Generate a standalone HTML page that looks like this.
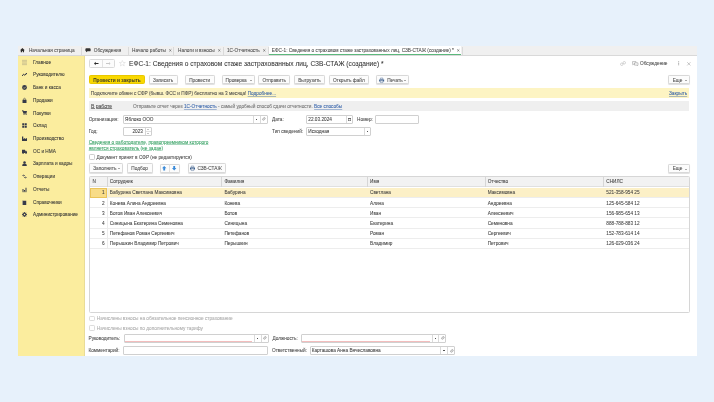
<!DOCTYPE html>
<html><head><meta charset="utf-8">
<style>
*{box-sizing:border-box;margin:0;padding:0}
html,body{width:714px;height:402px;overflow:hidden;background:#e7f1fb;font-family:"Liberation Sans",sans-serif;color:#484848}
#root *{-webkit-text-stroke:0.06px currentColor}
.a{position:absolute}
svg.a{overflow:visible}
.t{position:absolute;white-space:nowrap;font-size:4.73px;line-height:6px}
#win{position:absolute;left:18px;top:46px;width:679px;height:309.5px;background:#fff}
#tabs{position:absolute;left:18px;top:46px;width:679px;height:9.5px;background:#f0f0f0;border-bottom:1px solid #d9d9d9}
#side{position:absolute;left:18px;top:55.5px;width:67px;height:300px;background:#fbed9e;border-right:1px solid #e9dc98}
.sep{position:absolute;top:46.5px;width:1px;height:8.5px;background:#dadada}
.btn{position:absolute;height:9.4px;border:1px solid #d8d8d8;border-radius:1.5px;background:#fcfcfc;box-shadow:0 0.7px 0.7px rgba(0,0,0,.12);font-size:4.73px;line-height:7.3px;padding-top:0.8px;text-align:center;white-space:nowrap;color:#4a4a4a}
.inp{position:absolute;height:8.8px;border:1px solid #d0d0d0;border-radius:1px;background:#fff;font-size:4.73px;line-height:6.6px;padding-top:1px;white-space:nowrap;padding-left:0.9px;color:#3a3a3a}
.lnk{color:#2f5ea8;text-decoration:underline;text-decoration-thickness:0.5px;text-underline-offset:0.5px;text-decoration-color:rgba(47,94,168,.4)}
.cb{position:absolute;width:5.8px;height:5.6px;border:1px solid #cdcdcd;border-radius:1.2px;background:#fff}
.si{position:absolute;left:33px;font-size:4.73px;line-height:6px;padding-top:0.7px;white-space:nowrap;color:#333}
.vl{position:absolute;width:1px;background:#d6d6d6}
.row{position:absolute;left:89.6px;width:599px;border-bottom:1px solid #ededed}
.c{position:absolute;font-size:4.73px;line-height:10.25px;padding-top:0.7px;white-space:nowrap;color:#3e3e3e}
.dd{position:absolute;width:0;height:0;border-left:0.9px solid transparent;border-right:0.9px solid transparent;border-top:1px solid #555}
</style></head><body><div id="root" style="position:absolute;left:0;top:0;width:714px;height:402px;filter:blur(0.2px)">
<div id="win"></div><div id="tabs"></div><div id="side"></div>
<svg class="a" style="left:19.7px;top:47.8px" width="4.8" height="4.4" viewBox="0 0 10 9"><path d="M5 0L0 4.6h1.6V9h2.6V6.4h1.6V9h2.6V4.6H10z" fill="#2e2e2e"/></svg>
<div class="t" style="left:28.9px;top:47.9px">Начальная страница</div>
<div class="sep" style="left:80.5px"></div>
<svg class="a" style="left:84.8px;top:47.6px" width="6" height="4.3" viewBox="0 0 12 9"><path d="M2.5 0.5h7a2 2 0 0 1 2 2v2.5a2 2 0 0 1-2 2H5L2 8.8V7a2 2 0 0 1-1.5-2V2.5a2 2 0 0 1 2-2z" fill="#333"/></svg>
<div class="t" style="left:93.8px;top:47.9px">Обсуждения</div>
<div class="sep" style="left:128px"></div>
<div class="t" style="left:132px;top:47.9px">Начало работы</div>
<svg class="a" style="left:168.6px;top:48.9px" width="2.6" height="2.8" viewBox="0 0 6 6"><path d="M0.5 0.5l5 5M5.5 0.5l-5 5" stroke="#555" stroke-width="1.4"/></svg>
<div class="sep" style="left:173.3px"></div>
<div class="t" style="left:178px;top:47.9px">Налоги и взносы</div>
<svg class="a" style="left:217.5px;top:48.9px" width="2.6" height="2.8" viewBox="0 0 6 6"><path d="M0.5 0.5l5 5M5.5 0.5l-5 5" stroke="#555" stroke-width="1.4"/></svg>
<div class="sep" style="left:222.7px"></div>
<div class="t" style="left:227px;top:47.9px">1С-Отчетность</div>
<svg class="a" style="left:262.5px;top:48.9px" width="2.6" height="2.8" viewBox="0 0 6 6"><path d="M0.5 0.5l5 5M5.5 0.5l-5 5" stroke="#555" stroke-width="1.4"/></svg>
<div class="sep" style="left:267.6px"></div>
<div class="a" style="left:268.6px;top:46px;width:192.6px;height:9.1px;background:#fff;border-bottom:1.3px solid #5cb87c"></div>
<div class="t" style="left:271.8px;top:47.9px">ЕФС-1: Сведения о страховом стаже застрахованных лиц, СЗВ-СТАЖ (создание) *</div>
<svg class="a" style="left:457.3px;top:48.9px" width="2.6" height="2.8" viewBox="0 0 6 6"><path d="M0.5 0.5l5 5M5.5 0.5l-5 5" stroke="#555" stroke-width="1.4"/></svg>
<div class="sep" style="left:462.3px"></div>
<svg class="a" style="left:22.2px;top:59.60px" width="5" height="5" viewBox="0 0 10 10"><path d="M0 0.7h10M0 3.6h10M0 6.4h10M0 9.3h10" stroke="#bdb38a" stroke-width="1.4"/></svg>
<div class="si" style="top:59.00px">Главное</div>
<svg class="a" style="left:22.2px;top:72.32px" width="5" height="5" viewBox="0 0 10 10"><path d="M0.3 8L3.2 4.3L5.8 6.6L8.6 3.2" stroke="#2e3140" stroke-width="1.9" fill="none"/><path d="M6.6 1.8h3.4v3.4z" fill="#2e3140"/></svg>
<div class="si" style="top:71.72px">Руководителю</div>
<svg class="a" style="left:22.2px;top:85.04px" width="5" height="5" viewBox="0 0 10 10"><circle cx="5" cy="5" r="4.8" fill="#363a48"/><path d="M2.8 5.2L4.4 6.8L7.4 3.6" stroke="#fbed9e" stroke-width="1.3" fill="none"/></svg>
<div class="si" style="top:84.44px">Банк и касса</div>
<svg class="a" style="left:22.2px;top:97.76px" width="5" height="5" viewBox="0 0 10 10"><path d="M1 3.5h8v6.5H1z" fill="#363a48"/><path d="M3.2 4V2.2a1.8 1.8 0 0 1 3.6 0V4" stroke="#363a48" stroke-width="1" fill="none"/></svg>
<div class="si" style="top:97.16px">Продажи</div>
<svg class="a" style="left:22.2px;top:110.48px" width="5" height="5" viewBox="0 0 10 10"><path d="M0 0.5h2.2l0.6 1.5H10L8.8 6.8H3.3z" fill="#363a48"/><path d="M2 0.5L3.5 7.5h6" stroke="#363a48" stroke-width="1" fill="none"/><circle cx="4" cy="9" r="1" fill="#363a48"/><circle cx="8.3" cy="9" r="1" fill="#363a48"/></svg>
<div class="si" style="top:109.88px">Покупки</div>
<svg class="a" style="left:22.2px;top:123.20px" width="5" height="5" viewBox="0 0 10 10"><rect x="0.5" y="0.5" width="4" height="4" fill="#363a48"/><rect x="5.5" y="0.5" width="4" height="4" fill="#363a48"/><rect x="0.5" y="5.5" width="4" height="4" fill="#363a48"/><rect x="5.5" y="5.5" width="4" height="4" fill="#363a48"/></svg>
<div class="si" style="top:122.60px">Склад</div>
<svg class="a" style="left:22.2px;top:135.92px" width="5" height="5" viewBox="0 0 10 10"><path d="M0 10V1h2.5v5l3.5-2v2l4-2v6z" fill="#363a48"/></svg>
<div class="si" style="top:135.32px">Производство</div>
<svg class="a" style="left:22.2px;top:148.64px" width="5" height="5" viewBox="0 0 10 10"><path d="M0 1.5h6.2v6.5H0z" fill="#363a48"/><path d="M6.2 3.5h2.3L10 5.5v2.5H6.2z" fill="#363a48"/><circle cx="2.2" cy="8.6" r="1.4" fill="#363a48"/><circle cx="8" cy="8.6" r="1.4" fill="#363a48"/></svg>
<div class="si" style="top:148.04px">ОС и НМА</div>
<svg class="a" style="left:22.2px;top:161.36px" width="5" height="5" viewBox="0 0 10 10"><circle cx="5" cy="2.8" r="2.5" fill="#363a48"/><path d="M0.5 10V8a4.5 3 0 0 1 9 0v2z" fill="#363a48"/></svg>
<div class="si" style="top:160.76px">Зарплата и кадры</div>
<svg class="a" style="left:22.2px;top:174.08px" width="5" height="5" viewBox="0 0 10 10"><path d="M0.5 3h4.5M3.2 1.2L5 3L3.2 4.8M9.5 7h-4.5M6.8 5.2L5 7L6.8 8.8" stroke="#3a3e50" stroke-width="1.3" fill="none"/></svg>
<div class="si" style="top:173.48px">Операции</div>
<svg class="a" style="left:22.2px;top:186.80px" width="5" height="5" viewBox="0 0 10 10"><path d="M0.5 9.5h9" stroke="#363a48" stroke-width="1"/><rect x="1" y="4" width="2" height="5" fill="#363a48"/><rect x="4" y="6" width="2" height="3" fill="#363a48"/><rect x="7" y="1.5" width="2" height="7.5" fill="#363a48"/></svg>
<div class="si" style="top:186.20px">Отчеты</div>
<svg class="a" style="left:22.2px;top:199.52px" width="5" height="5" viewBox="0 0 10 10"><path d="M2 1.5h6.5v8.5H2z" fill="#363a48"/><path d="M1 1h1.2v9H1z" fill="#5d6070"/></svg>
<div class="si" style="top:198.92px">Справочники</div>
<svg class="a" style="left:22.2px;top:212.24px" width="5" height="5" viewBox="0 0 10 10"><circle cx="5" cy="5" r="3.6" fill="#363a48"/><circle cx="9.00" cy="5.00" r="1.1" fill="#363a48"/><circle cx="7.83" cy="7.83" r="1.1" fill="#363a48"/><circle cx="5.00" cy="9.00" r="1.1" fill="#363a48"/><circle cx="2.17" cy="7.83" r="1.1" fill="#363a48"/><circle cx="1.00" cy="5.00" r="1.1" fill="#363a48"/><circle cx="2.17" cy="2.17" r="1.1" fill="#363a48"/><circle cx="5.00" cy="1.00" r="1.1" fill="#363a48"/><circle cx="7.83" cy="2.17" r="1.1" fill="#363a48"/><circle cx="5" cy="5" r="1.5" fill="#fbed9e"/></svg>
<div class="si" style="top:211.64px">Администрирование</div>
<div class="btn" style="left:88.8px;top:59px;width:26px;height:8.7px;border-color:#dadada;box-shadow:none"></div><div class="a" style="left:101.6px;top:59.5px;width:1px;height:7.7px;background:#e2e2e2"></div>
<svg class="a" style="left:93.5px;top:61.8px" width="4.5" height="3" viewBox="0 0 9 6"><path d="M0 3L3.4 -0.4v2.3h5.6v2.2H3.4v2.3z" fill="#2a2a2a"/></svg>
<svg class="a" style="left:106.3px;top:61.8px" width="4.5" height="3" viewBox="0 0 9 6"><path d="M9 3L6 0v2H0v2h6v2z" fill="#c8c8c8"/></svg>
<svg class="a" style="left:118.9px;top:59.9px" width="6.7" height="6.6" viewBox="0 0 20 19"><path d="M10 1l2.6 6h6.4l-5.1 4 1.9 6.5L10 13.8 4.2 17.5 6.1 11 1 7h6.4z" fill="none" stroke="#cfcfcf" stroke-width="1.3"/></svg>
<div class="a" style="left:129px;top:58.9px;font-size:6.6px;line-height:9px;white-space:nowrap;color:#333">ЕФС-1: Сведения о страховом стаже застрахованных лиц, СЗВ-СТАЖ (создание) *</div>
<svg class="a" style="left:619.8px;top:60.9px" width="6" height="5" viewBox="0 0 12 10"><circle cx="3.5" cy="6.5" r="2.5" fill="none" stroke="#aaa" stroke-width="1"/><circle cx="8.5" cy="3.5" r="2.5" fill="none" stroke="#aaa" stroke-width="1"/></svg>
<svg class="a" style="left:631.7px;top:60.8px" width="6.5" height="5.2" viewBox="0 0 13 10"><path d="M1 1h7v4.5H4L1.5 7.5z" fill="none" stroke="#888" stroke-width="1"/><path d="M5 3.5h7v4.5L10.5 9.5V8H5z" fill="#fff" stroke="#888" stroke-width="1"/></svg>
<div class="t" style="left:640px;top:61.1px">Обсуждение</div>
<svg class="a" style="left:677.8px;top:61.2px" width="1.4" height="4.4" viewBox="0 0 2 6"><circle cx="1" cy="0.8" r="0.75" fill="#888"/><circle cx="1" cy="3" r="0.75" fill="#888"/><circle cx="1" cy="5.2" r="0.75" fill="#888"/></svg>
<svg class="a" style="left:687.4px;top:61.5px" width="3.7" height="3.7" viewBox="0 0 8 8"><path d="M0.5 0.5l7 7M7.5 0.5l-7 7" stroke="#888" stroke-width="1"/></svg>
<div class="btn" style="left:88.7px;top:75px;width:56.5px;height:9.4px;background:#f9d800;border-color:#e9c800;color:#3a3a2a;box-shadow:none;font-weight:bold;font-size:4.75px;-webkit-text-stroke:0">Провести и закрыть</div>
<div class="btn" style="left:148.5px;top:75px;width:29.3px;height:9.4px;">Записать</div>
<div class="btn" style="left:184.5px;top:75px;width:30.3px;height:9.4px;">Провести</div>
<div class="btn" style="left:222.4px;top:75px;width:32.4px;height:9.4px;">Проверка <span style="display:inline-block;vertical-align:middle;margin-left:1.5px;width:0;height:0;border-left:1.1px solid transparent;border-right:1.1px solid transparent;border-top:1.3px solid #555"></span></div>
<div class="btn" style="left:258.3px;top:75px;width:31.7px;height:9.4px;">Отправить</div>
<div class="btn" style="left:294px;top:75px;width:31px;height:9.4px;">Выгрузить</div>
<div class="btn" style="left:328.6px;top:75px;width:40.4px;height:9.4px;">Открыть файл</div>
<div class="btn" style="left:376.2px;top:75px;width:32.5px;height:9.4px;"><span style="padding-left:8.5px">Печать</span><span style="display:inline-block;vertical-align:middle;margin-left:1.5px;width:0;height:0;border-left:1.1px solid transparent;border-right:1.1px solid transparent;border-top:1.3px solid #555"></span></div>
<svg class="a" style="left:378.9px;top:77.6px" width="5.3" height="4.6" viewBox="0 0 12 11"><path d="M3 0h6v3H3z" fill="none" stroke="#3c5f8c" stroke-width="1"/><path d="M0 3.5h12v5H9.5V6h-7v2.5H0z" fill="#3c5f8c"/><path d="M3 7h6v4H3z" fill="none" stroke="#3c5f8c" stroke-width="1"/></svg>
<div class="btn" style="left:668.4px;top:75.2px;width:21.2px;height:9.2px;"><span style="padding-left:1.6px">Еще</span><span style="display:inline-block;vertical-align:middle;margin-left:2.5px;width:0;height:0;border-left:1.1px solid transparent;border-right:1.1px solid transparent;border-top:1.3px solid #555"></span></div>
<div class="a" style="left:88.7px;top:88.3px;width:600.7px;height:9.5px;background:#fdf4c3"></div>
<div class="t" style="left:90.8px;top:91.3px">Подключите обмен с СФР (бывш. ФСС и ПФР) бесплатно на 3 месяца! <span class="lnk">Подробнее...</span></div>
<div class="t lnk" style="left:669px;top:91.3px">Закрыть</div>
<div class="a" style="left:88.7px;top:101.1px;width:600.7px;height:10.3px;background:#efefef"></div>
<div class="a" style="left:90.9px;top:103.2px;font-size:5.1px;line-height:6px;white-space:nowrap;color:#444;text-decoration:underline;text-decoration-thickness:0.5px;text-underline-offset:0.5px;text-underline-offset:0px;text-decoration-color:rgba(60,60,60,.6)">В работе</div>
<div class="t" style="left:132.9px;top:104.1px;color:#707070">Отправьте отчет через <span class="lnk">1С-Отчетность</span> - самый удобный способ сдачи отчетности. <span class="lnk">Все способы</span></div>
<div class="t" style="left:88.7px;top:117.3px">Организация:</div>
<div class="inp" style="left:123.2px;top:114.9px;width:144.8px">Яблоко ООО</div>
<div class="a" style="left:253.2px;top:115.9px;width:1px;height:6.800000000000001px;background:#dadada"></div><div class="a" style="left:256.2px;top:118.60000000000001px;width:1.3px;height:1.3px;background:#555"></div>
<div class="a" style="left:260.2px;top:115.9px;width:1px;height:6.800000000000001px;background:#dadada"></div><svg class="a" style="left:262.4px;top:117.30000000000001px" width="3.8" height="3.8" viewBox="0 0 8 8"><ellipse cx="4" cy="4" rx="3.3" ry="2" transform="rotate(-45 4 4)" fill="none" stroke="#909090" stroke-width="1.4"/><path d="M2.8 5.2L5.2 2.8" stroke="#909090" stroke-width="1"/></svg>
<div class="t" style="left:272px;top:117.3px">Дата:</div>
<div class="inp" style="left:306.4px;top:114.9px;width:46.6px">22.03.2024</div>
<div class="a" style="left:345.6px;top:115.9px;width:1px;height:6.8px;background:#dadada"></div>
<svg class="a" style="left:348px;top:117.7px" width="3" height="3" viewBox="0 0 6 6"><rect x="0.5" y="0.5" width="5" height="5" fill="none" stroke="#555" stroke-width="1"/><rect x="0.5" y="0.5" width="5" height="1.6" fill="#555"/></svg>
<div class="t" style="left:357.1px;top:117.3px">Номер:</div>
<div class="inp" style="left:375.4px;top:114.9px;width:43.6px"></div>
<div class="t" style="left:88.7px;top:129.4px">Год:</div>
<div class="inp" style="left:123.2px;top:127.2px;width:28.5px;text-align:right;padding-right:7.8px">2023</div>
<div class="a" style="left:144.5px;top:128.2px;width:1px;height:6.6px;background:#d6d6d6"></div>
<div class="a" style="left:145.5px;top:131.3px;width:5.4px;height:0.6px;background:#e0e0e0"></div>
<div class="a" style="left:147.3px;top:129.3px;width:0;height:0;border-left:0.8px solid transparent;border-right:0.8px solid transparent;border-bottom:0.9px solid #888"></div>
<div class="a" style="left:147.3px;top:133px;width:0;height:0;border-left:0.8px solid transparent;border-right:0.8px solid transparent;border-top:0.9px solid #888"></div>
<div class="t" style="left:272px;top:129.4px">Тип сведений:</div>
<div class="inp" style="left:306.4px;top:127.2px;width:64.5px">Исходная</div>
<div class="a" style="left:363.6px;top:128.2px;width:1px;height:6.800000000000001px;background:#dadada"></div><div class="a" style="left:366.6px;top:130.9px;width:1.3px;height:1.3px;background:#555"></div>
<div class="t" style="left:88.7px;top:140px;color:#2f9e5e;line-height:5.9px"><span style="text-decoration:underline;text-decoration-thickness:0.5px;text-underline-offset:0px;text-decoration-color:rgba(47,158,94,.4)">Сведения о работодателе, правопреемником которого</span><br><span style="text-decoration:underline;text-decoration-thickness:0.5px;text-underline-offset:0px;text-decoration-color:rgba(47,158,94,.4)">является страхователь (не задан)</span></div>
<div class="cb" style="left:88.9px;top:154.2px"></div>
<div class="t" style="left:96.4px;top:155.4px">Документ принят в СФР (не редактируется)</div>
<div class="btn" style="left:88.8px;top:163.4px;width:34px;height:9.3px;"><span style="padding-left:1.5px">Заполнить</span><span style="display:inline-block;vertical-align:middle;margin-left:1.5px;width:0;height:0;border-left:1.1px solid transparent;border-right:1.1px solid transparent;border-top:1.3px solid #555"></span></div>
<div class="btn" style="left:126.6px;top:163.4px;width:26px;height:9.3px;">Подбор</div>
<div class="btn" style="left:159.5px;top:163.5px;width:20.2px;height:9.2px;"></div>
<div class="a" style="left:169.3px;top:164.3px;width:1px;height:7.6px;background:#e0e0e0"></div>
<svg class="a" style="left:161.9px;top:165.8px" width="4.4" height="4.4" viewBox="0 0 8 8"><path d="M4 0L8 4.2H5.7V8H2.3V4.2H0z" fill="#3a8ad8"/></svg>
<svg class="a" style="left:171.9px;top:165.8px" width="4.4" height="4.4" viewBox="0 0 8 8"><path d="M4 8L8 3.8H5.7V0H2.3V3.8H0z" fill="#3a8ad8"/></svg>
<div class="btn" style="left:187.5px;top:163.4px;width:38.7px;height:9.3px;"><span style="padding-left:5.5px">СЗВ-СТАЖ</span></div>
<svg class="a" style="left:189.9px;top:165.9px" width="5" height="4.6" viewBox="0 0 12 11"><path d="M3 0h6v3H3z" fill="none" stroke="#3c5f8c" stroke-width="1"/><path d="M0 3.5h12v5H9.5V6h-7v2.5H0z" fill="#3c5f8c"/><path d="M3 7h6v4H3z" fill="none" stroke="#3c5f8c" stroke-width="1"/></svg>
<div class="btn" style="left:668.4px;top:163.5px;width:21.2px;height:9.2px;"><span style="padding-left:1.6px">Еще</span><span style="display:inline-block;vertical-align:middle;margin-left:2.5px;width:0;height:0;border-left:1.1px solid transparent;border-right:1.1px solid transparent;border-top:1.3px solid #555"></span></div>
<div class="a" style="left:88.6px;top:175.8px;width:601px;height:136.8px;border:1px solid #d6d6d6;border-radius:1.5px"></div>
<div class="a" style="left:89.6px;top:176.8px;width:599px;height:10.4px;background:#f2f2f2;border-bottom:1px solid #e0e0e0"></div>
<div class="c" style="left:92.4px;top:176.8px;padding-top:0">N</div>
<div class="c" style="left:109.8px;top:176.8px;padding-top:0">Сотрудник</div>
<div class="c" style="left:224.4px;top:176.8px;padding-top:0">Фамилия</div>
<div class="c" style="left:370px;top:176.8px;padding-top:0">Имя</div>
<div class="c" style="left:487.7px;top:176.8px;padding-top:0">Отчество</div>
<div class="c" style="left:606.3px;top:176.8px;padding-top:0">СНИЛС</div>
<div class="vl" style="left:106.5px;top:176.8px;height:10.2px"></div>
<div class="vl" style="left:221px;top:176.8px;height:10.2px"></div>
<div class="vl" style="left:367.2px;top:176.8px;height:10.2px"></div>
<div class="vl" style="left:484.6px;top:176.8px;height:10.2px"></div>
<div class="vl" style="left:602.6px;top:176.8px;height:10.2px"></div>
<div class="row" style="top:187.60px;height:10.25px;background:#fcf0c7;"></div>
<div class="a" style="left:89.6px;top:187.60px;width:17px;height:10.25px;background:#f8dc88;border:1px solid #eac45a"></div>
<div class="c" style="left:89.6px;width:15px;text-align:right;top:187.60px">1</div>
<div class="vl" style="left:106.5px;top:187.60px;height:10.25px;background:#ececec"></div>
<div class="c" style="left:109.8px;top:187.60px">Бабурина Светлана Максимовна</div>
<div class="c" style="left:224.4px;top:187.60px">Бабурина</div>
<div class="c" style="left:370px;top:187.60px">Светлана</div>
<div class="c" style="left:487.7px;top:187.60px">Максимовна</div>
<div class="c" style="left:606.3px;top:187.60px">521-358-954 25</div>
<div class="row" style="top:197.82px;height:10.25px;"></div>
<div class="c" style="left:89.6px;width:15px;text-align:right;top:197.82px">2</div>
<div class="vl" style="left:106.5px;top:197.82px;height:10.25px;background:#ececec"></div>
<div class="c" style="left:109.8px;top:197.82px">Конева Алина Андреевна</div>
<div class="c" style="left:224.4px;top:197.82px">Конева</div>
<div class="c" style="left:370px;top:197.82px">Алина</div>
<div class="c" style="left:487.7px;top:197.82px">Андреевна</div>
<div class="c" style="left:606.3px;top:197.82px">125-645-584 12</div>
<div class="row" style="top:208.04px;height:10.25px;"></div>
<div class="c" style="left:89.6px;width:15px;text-align:right;top:208.04px">3</div>
<div class="vl" style="left:106.5px;top:208.04px;height:10.25px;background:#ececec"></div>
<div class="c" style="left:109.8px;top:208.04px">Ботов Иван Алексеевич</div>
<div class="c" style="left:224.4px;top:208.04px">Ботов</div>
<div class="c" style="left:370px;top:208.04px">Иван</div>
<div class="c" style="left:487.7px;top:208.04px">Алексеевич</div>
<div class="c" style="left:606.3px;top:208.04px">156-985-654 13</div>
<div class="row" style="top:218.26px;height:10.25px;"></div>
<div class="c" style="left:89.6px;width:15px;text-align:right;top:218.26px">4</div>
<div class="vl" style="left:106.5px;top:218.26px;height:10.25px;background:#ececec"></div>
<div class="c" style="left:109.8px;top:218.26px">Синицына Екатерина Семеновна</div>
<div class="c" style="left:224.4px;top:218.26px">Синицына</div>
<div class="c" style="left:370px;top:218.26px">Екатерина</div>
<div class="c" style="left:487.7px;top:218.26px">Семеновна</div>
<div class="c" style="left:606.3px;top:218.26px">888-788-883 12</div>
<div class="row" style="top:228.48px;height:10.25px;"></div>
<div class="c" style="left:89.6px;width:15px;text-align:right;top:228.48px">5</div>
<div class="vl" style="left:106.5px;top:228.48px;height:10.25px;background:#ececec"></div>
<div class="c" style="left:109.8px;top:228.48px">Петефанов Роман Сергеевич</div>
<div class="c" style="left:224.4px;top:228.48px">Петефанов</div>
<div class="c" style="left:370px;top:228.48px">Роман</div>
<div class="c" style="left:487.7px;top:228.48px">Сергеевич</div>
<div class="c" style="left:606.3px;top:228.48px">152-783-614 14</div>
<div class="row" style="top:238.70px;height:10.25px;"></div>
<div class="c" style="left:89.6px;width:15px;text-align:right;top:238.70px">6</div>
<div class="vl" style="left:106.5px;top:238.70px;height:10.25px;background:#ececec"></div>
<div class="c" style="left:109.8px;top:238.70px">Перышкин Владимир Петрович</div>
<div class="c" style="left:224.4px;top:238.70px">Перышкин</div>
<div class="c" style="left:370px;top:238.70px">Владимир</div>
<div class="c" style="left:487.7px;top:238.70px">Петрович</div>
<div class="c" style="left:606.3px;top:238.70px">126-029-036 24</div>
<div class="cb" style="left:89px;top:315.9px;border-color:#dcdcdc"></div>
<div class="t" style="left:96.8px;top:316.4px;color:#ababab">Начислены взносы на обязательное пенсионное страхование</div>
<div class="cb" style="left:89px;top:325.3px;border-color:#dcdcdc"></div>
<div class="t" style="left:96.8px;top:326.2px;color:#ababab">Начислены взносы по дополнительному тарифу</div>
<div class="t" style="left:88.5px;top:336.3px">Руководитель:</div>
<div class="inp" style="left:123.8px;top:334px;width:144.8px"></div>
<div class="a" style="left:124.8px;top:341.2px;width:127.4px;height:0.8px;background:#f3bdbd"></div>
<div class="a" style="left:253.8px;top:335px;width:1px;height:6.800000000000001px;background:#dadada"></div><div class="a" style="left:256.8px;top:337.7px;width:1.3px;height:1.3px;background:#555"></div>
<div class="a" style="left:261.1px;top:335px;width:1px;height:6.800000000000001px;background:#dadada"></div><svg class="a" style="left:263.3px;top:336.4px" width="3.8" height="3.8" viewBox="0 0 8 8"><ellipse cx="4" cy="4" rx="3.3" ry="2" transform="rotate(-45 4 4)" fill="none" stroke="#909090" stroke-width="1.4"/><path d="M2.8 5.2L5.2 2.8" stroke="#909090" stroke-width="1"/></svg>
<div class="t" style="left:272.5px;top:336.3px">Должность:</div>
<div class="inp" style="left:301.4px;top:334px;width:144.6px"></div>
<div class="a" style="left:302.4px;top:341.2px;width:127.6px;height:0.8px;background:#f3bdbd"></div>
<div class="a" style="left:431.5px;top:335px;width:1px;height:6.800000000000001px;background:#dadada"></div><div class="a" style="left:434.5px;top:337.7px;width:1.3px;height:1.3px;background:#555"></div>
<div class="a" style="left:438.3px;top:335px;width:1px;height:6.800000000000001px;background:#dadada"></div><svg class="a" style="left:440.5px;top:336.4px" width="3.8" height="3.8" viewBox="0 0 8 8"><ellipse cx="4" cy="4" rx="3.3" ry="2" transform="rotate(-45 4 4)" fill="none" stroke="#909090" stroke-width="1.4"/><path d="M2.8 5.2L5.2 2.8" stroke="#909090" stroke-width="1"/></svg>
<div class="t" style="left:88.5px;top:348.4px">Комментарий:</div>
<div class="inp" style="left:123.2px;top:346px;width:144.8px"></div>
<div class="t" style="left:272px;top:348.4px">Ответственный:</div>
<div class="inp" style="left:309.8px;top:346px;width:145.7px">Карташова Анна Вячеславовна</div>
<div class="a" style="left:440.4px;top:347.2px;width:1px;height:6.800000000000001px;background:#dadada"></div><div class="a" style="left:443.4px;top:349.9px;width:1.3px;height:1.3px;background:#555"></div>
<div class="a" style="left:447.3px;top:347.2px;width:1px;height:6.800000000000001px;background:#dadada"></div><svg class="a" style="left:449.5px;top:348.59999999999997px" width="3.8" height="3.8" viewBox="0 0 8 8"><ellipse cx="4" cy="4" rx="3.3" ry="2" transform="rotate(-45 4 4)" fill="none" stroke="#909090" stroke-width="1.4"/><path d="M2.8 5.2L5.2 2.8" stroke="#909090" stroke-width="1"/></svg>
</div></body></html>
